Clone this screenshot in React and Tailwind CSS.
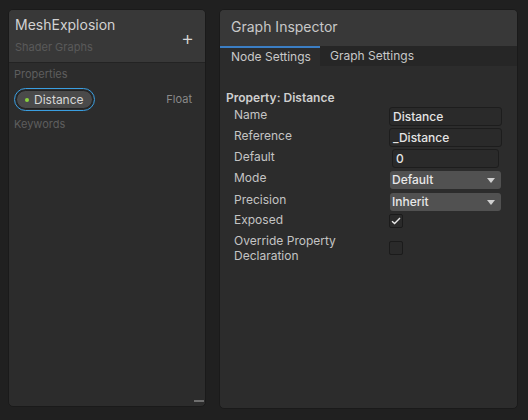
import React from "react";

const font = { fontFamily: "Inter, 'Noto Sans', sans-serif" };

function TextField({ value, className = "" }) {
  return (
    <div
      className={`h-[19px] rounded-[3px] border border-[#1d1d1d] bg-[#2a2a2a] flex items-center pl-[3px] text-[12px] font-medium text-[#e4e4e4] ${className}`}
    >
      {value}
    </div>
  );
}

function Dropdown({ value }) {
  return (
    <div className="h-[18px] w-[111px] rounded-[3px] bg-[#515151] flex items-center justify-between pl-[2px] pr-[6px] text-[12px] font-medium text-[#e8e8e8]">
      <span>{value}</span>
      <svg width="8" height="5" viewBox="0 0 8 5">
        <path d="M0 0 L8 0 L4 5 Z" fill="#d0d0d0" />
      </svg>
    </div>
  );
}

function Checkbox({ checked }) {
  return (
    <div className="w-[14px] h-[14px] rounded-[2px] border border-[#1b1b1b] bg-[#2a2a2a] flex items-center justify-center">
      {checked && (
        <svg width="10" height="8" viewBox="0 0 10 8">
          <path d="M1 4.2 L3.6 6.6 L9 1" fill="none" stroke="#e8e8e8" strokeWidth="1.4" />
        </svg>
      )}
    </div>
  );
}

export default function App() {
  return (
    <div
      className="w-[528px] h-[420px] bg-[#202020] flex items-start pl-[8px] pt-[9px] gap-[13px]"
      style={font}
    >
      {/* Left panel */}
      <div className="relative w-[198px] h-[398px] rounded-[5px] border border-[#1a1a1a] bg-[#2c2c2c] flex flex-col overflow-hidden">
        <div className="h-[53px] shrink-0 bg-[#383838] border-b border-[#232323] flex items-start justify-between pl-[6px] pr-[11px]">
          <div className="flex flex-col">
            <div className="mt-[6px] text-[14px] leading-[18px] text-[#d2d2d2]">MeshExplosion</div>
            <div className="mt-[6px] text-[11px] leading-[14px] text-[#5a5a5a]">Shader Graphs</div>
          </div>
          <div className="mt-[18px] text-[20px] leading-[20px] font-light text-[#d8d8d8]">+</div>
        </div>
        <div className="pl-[5px] pr-[13px] flex flex-col">
          <div className="mt-[4px] text-[11px] leading-[14px] text-[#5e5e5e]">Properties</div>
          <div className="mt-[7px] flex items-center justify-between">
            <div className="h-[23px] w-[81px] rounded-full border border-[#3a9ee0] p-[1px] flex">
              <div className="flex-1 rounded-full bg-[#4a4a4a] border border-[#222] flex items-center pl-[8px] gap-[5px]">
                <div className="w-[4px] h-[4px] rounded-full bg-[#8ad33f]" />
                <span className="text-[12px] leading-[14px] text-[#d8d8d8]">Distance</span>
              </div>
            </div>
            <span className="text-[11px] text-[#8a8a8a]">Float</span>
          </div>
          <div className="mt-[6px] text-[11px] leading-[14px] text-[#5e5e5e]">Keywords</div>
        </div>
        <div className="absolute right-[1px] bottom-[4px] w-[10px] h-[2px] bg-[#6e6e6e]" />
      </div>

      {/* Right panel */}
      <div className="w-[299px] h-[400px] rounded-[5px] border border-[#1a1a1a] bg-[#2c2c2c] flex flex-col overflow-hidden">
        <div className="h-[36px] shrink-0 bg-[#383838] flex items-start pt-[8px] pl-[11px] text-[14px] leading-[18px] text-[#c8c8c8]">
          Graph Inspector
        </div>
        <div className="h-[20px] shrink-0 bg-[#262626] flex text-[12px] text-[#c8c8c8]">
          <div className="w-[100px] bg-[#2c2c2c] border-t-2 border-[#3b7ec4] flex items-center pl-[11px]">
            Node Settings
          </div>
          <div className="flex items-center pl-[10px]">Graph Settings</div>
        </div>
        <div className="flex flex-col pl-[6px]">
          <div className="mt-[24px] text-[12px] leading-[15px] font-semibold text-[#cfcfcf]">Property: Distance</div>
          <div className="flex flex-col text-[12px] text-[#c4c4c4]">
            <div className="mt-[2px] h-[19px] flex items-center">
              <span className="w-[163px] pl-[8px] -mt-[3px]">Name</span>
              <TextField value="Distance" className="w-[113px]" />
            </div>
            <div className="mt-[2px] h-[19px] flex items-center">
              <span className="w-[163px] pl-[8px] -mt-[3px]">Reference</span>
              <TextField value="_Distance" className="w-[113px]" />
            </div>
            <div className="mt-[2px] h-[19px] flex items-center">
              <span className="w-[166px] pl-[8px] -mt-[3px]">Default</span>
              <TextField value="0" className="w-[107px]" />
            </div>
            <div className="mt-[3px] h-[18px] flex items-center">
              <span className="w-[164px] pl-[8px] -mt-[4px]">Mode</span>
              <Dropdown value="Default" />
            </div>
            <div className="mt-[4px] h-[18px] flex items-center">
              <span className="w-[164px] pl-[8px] -mt-[4px]">Precision</span>
              <Dropdown value="Inherit" />
            </div>
            <div className="mt-[3px] h-[14px] flex items-center">
              <span className="w-[163px] pl-[8px] -mt-[2px]">Exposed</span>
              <Checkbox checked />
            </div>
            <div className="mt-[5px] flex items-start">
              <span className="w-[163px] pl-[8px] leading-[15px]">
                Override Property
                <br />
                Declaration
              </span>
              <div className="mt-[8px]">
                <Checkbox />
              </div>
            </div>
          </div>
        </div>
      </div>
    </div>
  );
}
